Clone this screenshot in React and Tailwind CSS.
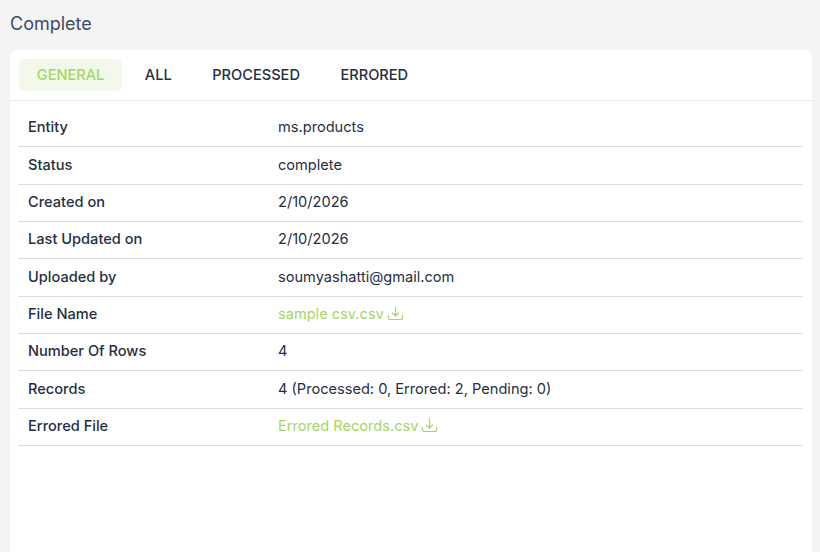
import React from "react";

const rows = [
  { label: "Entity", value: "ms.products" },
  { label: "Status", value: "complete" },
  { label: "Created on", value: "2/10/2026" },
  { label: "Last Updated on", value: "2/10/2026" },
  { label: "Uploaded by", value: "soumyashatti@gmail.com" },
  { label: "File Name", value: "sample csv.csv", link: true },
  { label: "Number Of Rows", value: "4" },
  { label: "Records", value: "4 (Processed: 0, Errored: 2, Pending: 0)" },
  { label: "Errored File", value: "Errored Records.csv", link: true },
];

const tabs = ["GENERAL", "ALL", "PROCESSED", "ERRORED"];

const DownloadIcon = () => (
  <svg className="-mt-[2px]" width="17" height="17" viewBox="0 0 17 17" fill="none" stroke="currentColor" strokeWidth="1.2" strokeLinecap="round" strokeLinejoin="round">
    <path d="M8.5 2v9" />
    <path d="M5.5 8l3 3 3-3" />
    <path d="M1.5 10.5v2.5a1.5 1.5 0 0 0 1.5 1.5h11a1.5 1.5 0 0 0 1.5-1.5v-2.5" />
  </svg>
);

const App = () => {
  return (
    <div className="h-[552px] overflow-hidden bg-[#f4f4f4] pl-[10px] pr-2 font-['Inter',sans-serif]">
      <h1 className="h-[50px] pt-[12px] text-[18px] leading-[24px] text-[#3d4d63]">
        Complete
      </h1>
      <div className="h-[502px] rounded-t-lg bg-white">
        <div className="flex h-[51px] gap-[5px] border-b border-[#e5eaf2] pl-[9px] pt-[9px]">
          {tabs.map((tab, i) => (
            <button
              key={tab}
              className={`h-[32px] rounded-md px-[17.75px] text-[14.6px] font-medium leading-[32px] ${
                i === 0 ? "bg-[#f3f9ea] text-[#a5d662]" : "text-[#252f3f]"
              }`}
            >
              {tab}
            </button>
          ))}
        </div>
        <div className="mx-[8px] w-[785px] pt-[9px]">
          {rows.map((row) => (
            <div
              key={row.label}
              className="flex h-[37.33px] items-center border-b border-[#dcdcdc] pl-[10px] text-[14.6px]"
            >
              <div className="w-[250px] font-medium text-[#252f3f]">{row.label}</div>
              {row.link ? (
                <div className="flex items-center gap-[3px] text-[#a5d662]">
                  {row.value}
                  <DownloadIcon />
                </div>
              ) : (
                <div className="text-[#252f3f]">{row.value}</div>
              )}
            </div>
          ))}
        </div>
      </div>
    </div>
  );
};

export default App;
